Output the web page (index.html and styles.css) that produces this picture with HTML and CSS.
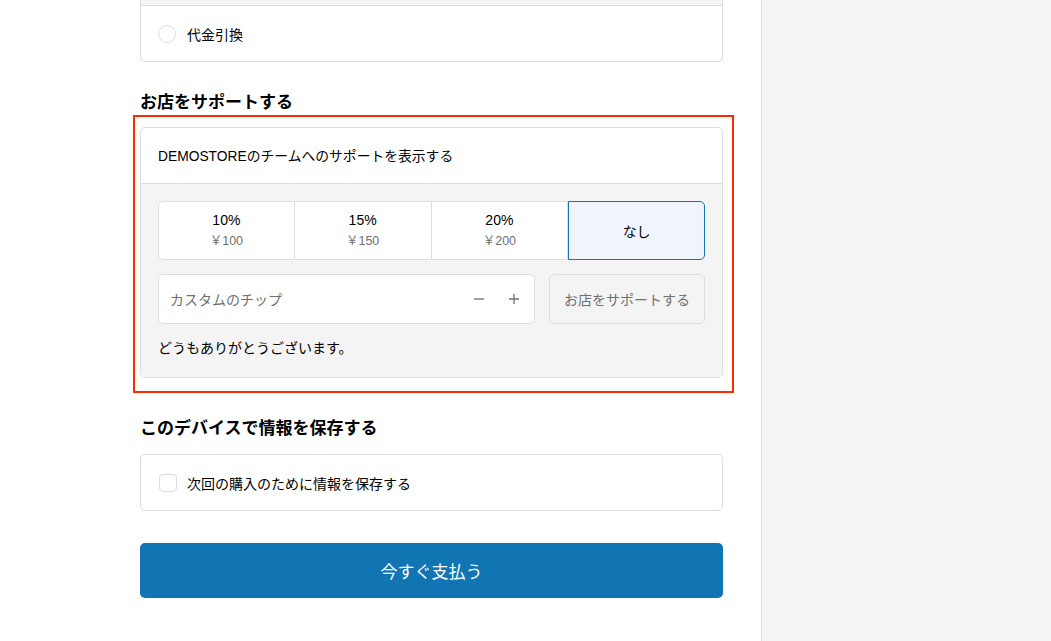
FILE: index.html
```html
<!DOCTYPE html>
<html lang="ja">

<head>
    <meta charset="utf-8">
    <title>チェックアウト</title>
    <link rel="stylesheet" href="styles.css">
</head>

<body>
    <div class="page">
        <!-- 左側：フォーム -->
        <main class="main">
            <div class="content">
                <div class="card payment-card">
                    <div class="payment-extra"></div>
                    <label class="option-row">
                        <span class="radio"></span>
                        <span>代金引換</span>
                    </label>
                </div>

                <h2 class="section-title">お店をサポートする</h2>
                <div class="tip-section">
                    <div class="card tip-card">
                        <div class="tip-header">DEMOSTOREのチームへのサポートを表示する</div>
                        <div class="tip-body">
                            <div class="tip-options">
                                <button class="tip-option">
                                    <span class="tip-percent">10%</span>
                                    <span class="tip-amount">￥100</span>
                                </button>
                                <button class="tip-option">
                                    <span class="tip-percent">15%</span>
                                    <span class="tip-amount">￥150</span>
                                </button>
                                <button class="tip-option">
                                    <span class="tip-percent">20%</span>
                                    <span class="tip-amount">￥200</span>
                                </button>
                                <button class="tip-option selected">
                                    <span class="tip-percent">なし</span>
                                </button>
                            </div>
                            <div class="custom-row">
                                <div class="custom-input">
                                    <span class="placeholder">カスタムのチップ</span>
                                    <span class="stepper">
                                        <svg width="12" height="12" viewBox="0 0 12 12"><path d="M1 6h10" stroke="#707070" stroke-width="1.3"/></svg>
                                        <svg width="12" height="12" viewBox="0 0 12 12"><path d="M1 6h10M6 1v10" stroke="#707070" stroke-width="1.3"/></svg>
                                    </span>
                                </div>
                                <button class="support-button">お店をサポートする</button>
                            </div>
                            <p class="thanks">どうもありがとうございます。</p>
                        </div>
                    </div>
                    <!-- ハイライト枠 -->
                    <div class="highlight"></div>
                </div>

                <h2 class="section-title save-title">このデバイスで情報を保存する</h2>
                <div class="card">
                    <label class="option-row">
                        <span class="checkbox"></span>
                        <span>次回の購入のために情報を保存する</span>
                    </label>
                </div>

                <button class="pay-button">今すぐ支払う</button>
            </div>
        </main>
        <!-- 右側：注文サマリー -->
        <aside class="summary"></aside>
    </div>
</body>

</html>
```

FILE: styles.css
```css
html,
body {
    margin: 0;
    height: 100%;
    overflow: hidden;
    font-family: "Liberation Sans", "Noto Sans CJK JP", sans-serif;
    color: #000;
}

.page {
    display: flex;
    height: 100%;
}

.main {
    width: 761px;
    background: #fff;
}

.content {
    width: 583px;
    margin-left: 140px;
}

.summary {
    flex: 1;
    background: #f5f5f5;
    border-left: 1px solid #e1e1e1;
}

.card {
    border: 1px solid #dedede;
    border-radius: 5px;
    background: #fff;
    overflow: hidden;
}

.payment-card {
    margin-top: -21px;
}

.payment-extra {
    height: 25px;
    background: #f4f4f4;
    border-bottom: 1px solid #dedede;
}

.option-row {
    display: flex;
    align-items: center;
    gap: 11px;
    height: 55px;
    padding: 0 17px;
    font-size: 14px;
}

.radio {
    width: 16px;
    height: 16px;
    border: 1px solid #dedede;
    border-radius: 50%;
    background: #fff;
}

.checkbox {
    width: 16px;
    height: 16px;
    border: 1px solid #dedede;
    border-radius: 4px;
    background: #fff;
    margin-left: 1px;
    margin-right: -1px;
}

.section-title {
    margin: 30px 0 13px;
    font-size: 17px;
    font-weight: bold;
    line-height: 22px;
}

.save-title {
    margin-top: 40px;
    margin-bottom: 14px;
}

.tip-section {
    position: relative;
}

.tip-header {
    height: 53px;
    display: flex;
    align-items: center;
    padding: 0 17px 2px;
    font-size: 13.8px;
    border-bottom: 1px solid #dedede;
}

.tip-body {
    background: #f4f4f4;
    padding: 17px 17px 19px;
}

.tip-options {
    display: grid;
    grid-template-columns: repeat(4, 1fr);
    height: 59px;
}

.tip-option {
    display: flex;
    flex-direction: column;
    align-items: center;
    justify-content: center;
    gap: 2px;
    background: #fff;
    border: 1px solid #dedede;
    border-left: none;
    font-family: inherit;
    padding: 0;
}

.tip-option:first-child {
    border-left: 1px solid #dedede;
    border-radius: 5px 0 0 5px;
}

.tip-option.selected {
    background: #f0f5fd;
    border: 1px solid #1773b0;
    border-radius: 0 5px 5px 0;
}

.tip-percent {
    font-size: 14px;
    color: #000;
}

.tip-amount {
    font-size: 12.5px;
    color: #707070;
}

.custom-row {
    display: flex;
    gap: 14px;
    margin-top: 14px;
    height: 50px;
}

.custom-input {
    flex: 1;
    display: flex;
    align-items: center;
    justify-content: space-between;
    background: #fff;
    border: 1px solid #dedede;
    border-radius: 5px;
    padding: 0 14px 0 11px;
}

.placeholder {
    font-size: 14px;
    color: #707070;
}

.stepper {
    display: flex;
    gap: 23px;
}

.support-button {
    width: 156px;
    background: #f4f4f4;
    border: 1px solid #dedede;
    border-radius: 5px;
    font-family: inherit;
    font-size: 14px;
    color: #707070;
}

.thanks {
    margin: 14px 0 0;
    font-size: 14px;
    line-height: 20px;
}

.highlight {
    position: absolute;
    top: -12px;
    left: -7px;
    right: -11px;
    bottom: -15px;
    border: 2px solid #ff2a00;
    pointer-events: none;
}

.pay-button {
    display: block;
    width: 100%;
    height: 55px;
    margin-top: 32px;
    background: #1174b3;
    color: #fff;
    border: none;
    border-radius: 5px;
    font-family: inherit;
    font-size: 17px;
}
```
